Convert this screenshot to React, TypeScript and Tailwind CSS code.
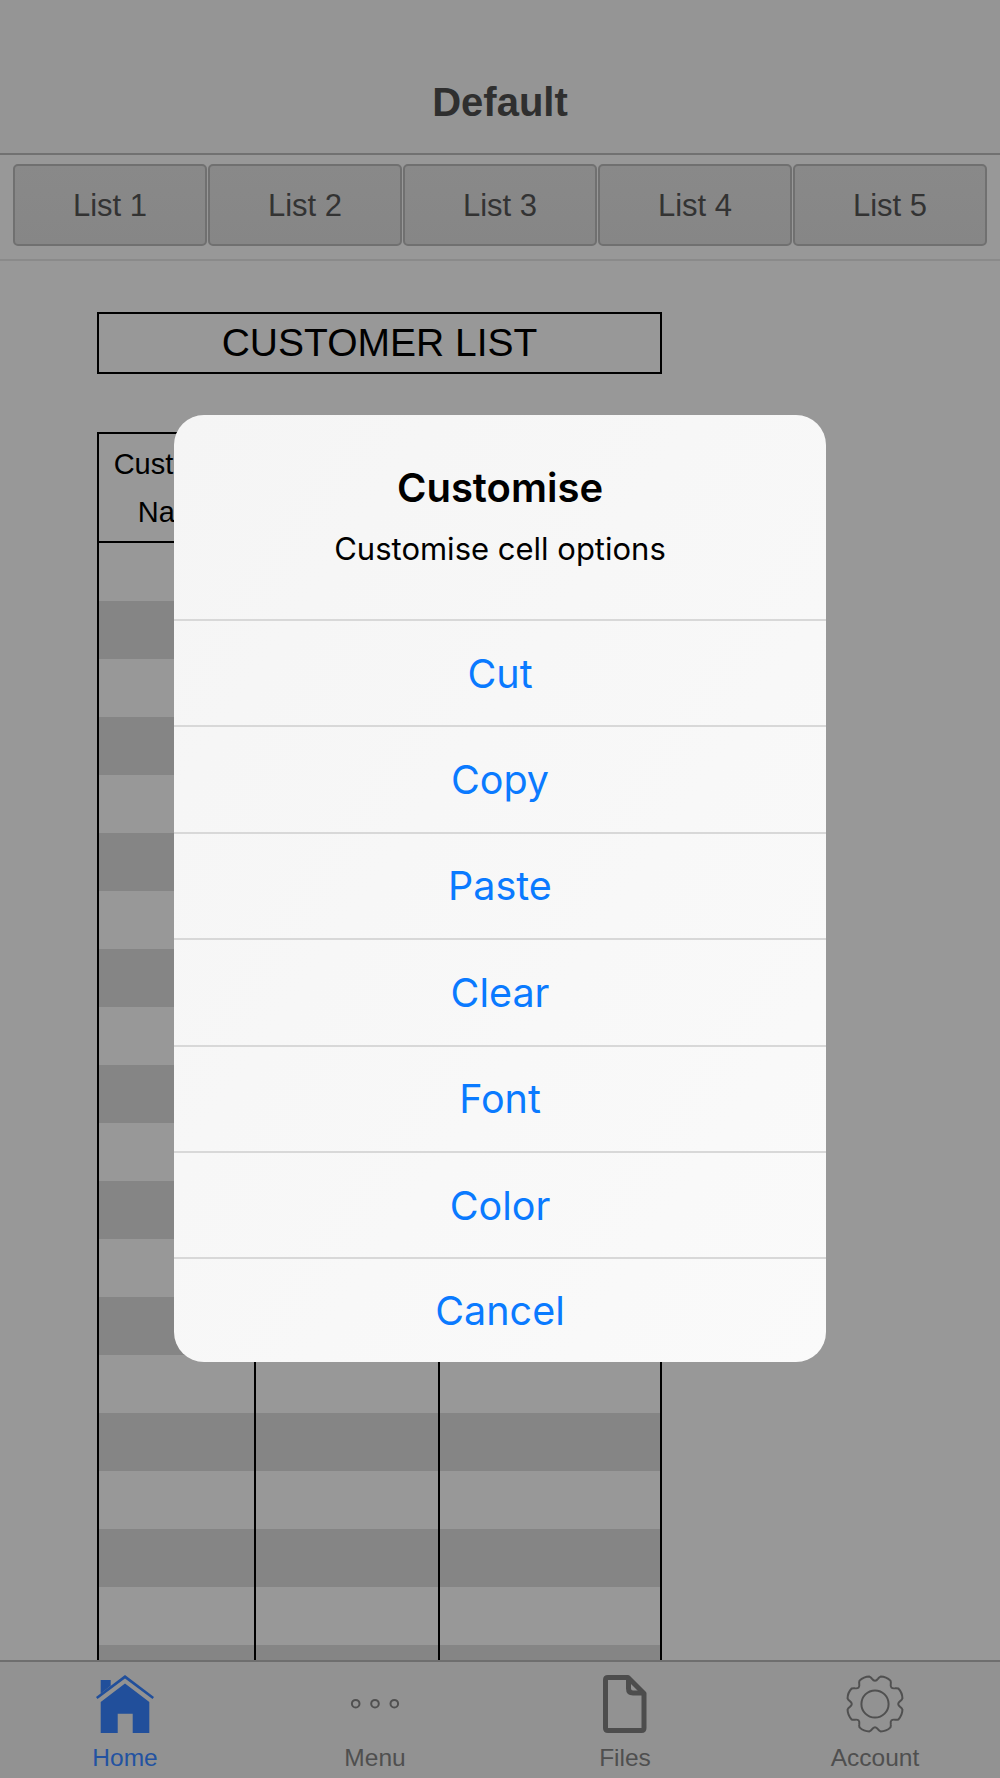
const gearPath = (() => {
  const cx = 30;
  const cy = 30;
  const pt = (deg: number, r: number) => {
    const a = (deg * Math.PI) / 180;
    return `${(cx + r * Math.sin(a)).toFixed(2)} ${(cy - r * Math.cos(a)).toFixed(2)}`;
  };
  let d = "";
  for (let i = 0; i < 8; i++) {
    const c = 22.5 + i * 45;
    if (i === 0) d += `M${pt(c - 11, 28)} `;
    d += `Q${pt(c, 29.6)} ${pt(c + 11, 28)} `;
    d += `Q${pt(c + 14, 27)} ${pt(c + 15.5, 25.6)} Q${pt(c + 22.5, 21)} ${pt(c + 29.5, 25.6)} Q${pt(c + 31, 27)} ${pt(c + 34, 28)} `;
  }
  return d + "Z";
})();

function HomeIcon() {
  return (
    <svg viewBox="0 0 58 58" className="w-[58px] h-[58px]" fill="#214f9b">
      <path d="M29 8.5 L53.3 27 V58 H36.7 V38.7 H21.7 V58 H4.7 V27 Z" />
      <path d="M0 22 L29 0 L58 22 L56.5 24 L29 3.5 L1.5 24 Z" />
      <path d="M4.7 5 H14.7 V10.8 L4.7 18.4 Z" />
    </svg>
  );
}

function MenuIcon() {
  return (
    <svg viewBox="0 0 58 58" className="w-[58px] h-[58px]" fill="none" stroke="#505050" strokeWidth="2">
      <circle cx="9.7" cy="28.7" r="3.8" />
      <circle cx="29" cy="28.7" r="3.8" />
      <circle cx="48.3" cy="28.7" r="3.8" />
    </svg>
  );
}

function FileIcon() {
  return (
    <svg viewBox="0 0 44 58" className="w-[44px] h-[58px]" fill="none" stroke="#4d4d4d" strokeWidth="5" strokeLinejoin="round">
      <path d="M5 2.5 H25 L41 18.5 V53 Q41 55.5 38.5 55.5 H5 Q2.5 55.5 2.5 53 V5 Q2.5 2.5 5 2.5 Z" />
      <path d="M25.5 2.5 V13.5 Q25.5 18 30 18 H41" />
    </svg>
  );
}

function GearIcon() {
  return (
    <svg viewBox="0 0 60 60" className="w-[60px] h-[60px]" fill="none" stroke="#505050" strokeWidth="2" strokeLinejoin="round">
      <path d={gearPath} />
      <circle cx="30" cy="30" r="13.6" />
    </svg>
  );
}

const tabs = ["List 1", "List 2", "List 3", "List 4", "List 5"];
const actions = ["Cut", "Copy", "Paste", "Clear", "Font", "Color"];
const rows = Array.from({ length: 20 }, (_, i) => i);

const navItems = [
  { label: "Home", icon: <HomeIcon />, color: "text-[#2352a1]" },
  { label: "Menu", icon: <MenuIcon />, color: "text-[#4f4f4f]" },
  { label: "Files", icon: <FileIcon />, color: "text-[#4f4f4f]" },
  { label: "Account", icon: <GearIcon />, color: "text-[#4f4f4f]" },
];

export default function App() {
  return (
    <div className="relative w-[1000px] h-[1778px] overflow-hidden flex flex-col bg-[#989898] font-['Liberation_Sans',Arial,sans-serif]">
      <header className="h-[155px] shrink-0 bg-[#959595] border-b-2 border-[#717171] flex justify-center pt-[79px]">
        <h1 className="text-[40px] leading-[46px] font-bold text-[#2f2f2f]">Default</h1>
      </header>

      <nav className="h-[106px] shrink-0 border-b-2 border-[#8a8a8a] pt-[9px] pl-[13px] pr-[13px] flex gap-[1px]">
        {tabs.map((t) => (
          <div
            key={t}
            className="flex-1 h-[82px] rounded-[5px] border-2 border-[#707070] bg-gradient-to-b from-[#898989] to-[#868686] flex items-center justify-center pt-[3px] text-[31px] text-[#333333]"
          >
            {t}
          </div>
        ))}
      </nav>

      <main className="flex-1 min-h-0 overflow-hidden pl-[97px] pt-[51px]">
        <div className="w-[565px] h-[62px] border-2 border-black flex items-center justify-center text-[39px] text-black">
          CUSTOMER LIST
        </div>
        <div className="w-[565px] mt-[58px] border-x-2 border-t-2 border-black text-black">
          <div className="flex h-[109px] border-b-2 border-black">
            <div className="w-[157px] border-r-2 border-black flex items-center justify-center text-center text-[29px] leading-[48px]">
              Customer
              <br />
              Name
            </div>
            <div className="w-[184px] border-r-2 border-black" />
            <div className="flex-1" />
          </div>
          {rows.map((i) => (
            <div key={i} className={`flex h-[58px] ${i % 2 === 1 ? "bg-[#858585]" : ""}`}>
              <div className="w-[157px] border-r-2 border-black" />
              <div className="w-[184px] border-r-2 border-black" />
              <div className="flex-1" />
            </div>
          ))}
        </div>
      </main>

      <footer className="h-[118px] shrink-0 bg-[#929292] border-t-2 border-[#6e6e6e] flex">
        {navItems.map((n) => (
          <div key={n.label} className="w-[250px] flex flex-col items-center pt-[12px]">
            <div className="h-[60px] flex items-center justify-center">{n.icon}</div>
            <div className={`mt-[10px] text-[24.5px] leading-[28px] ${n.color}`}>{n.label}</div>
          </div>
        ))}
      </footer>

      <div className="absolute left-[174px] top-[415px] w-[652px] h-[947px] rounded-[30px] overflow-hidden flex flex-col bg-gradient-to-br from-[#f5f5f5] to-[#fafafa] font-['Inter',sans-serif] text-center">
        <div className="h-[204px] shrink-0 pt-[50px]">
          <div className="text-[40px] leading-[46px] font-semibold text-black">Customise</div>
          <div className="mt-[20px] text-[31px] leading-[36px] text-black">Customise cell options</div>
        </div>
        {actions.map((a) => (
          <div key={a} className="h-[106.4px] shrink-0 border-t-2 border-[#d8d8d8] flex items-center justify-center pt-[2px] text-[39.5px] text-[#0a7aff]">
            {a}
          </div>
        ))}
        <div className="flex-1 border-t-2 border-[#d8d8d8] flex items-center justify-center pt-[2px] text-[39.5px] text-[#0a7aff]">
          Cancel
        </div>
      </div>
    </div>
  );
}
